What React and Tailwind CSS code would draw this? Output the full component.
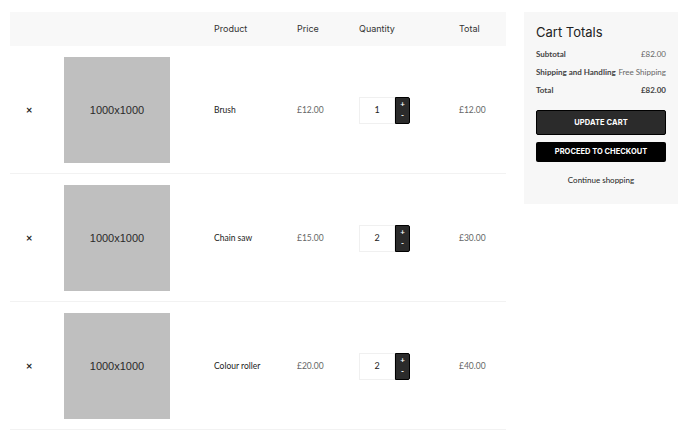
import React from "react";

const items = [
  { name: "Brush", price: "£12.00", qty: 1, total: "£12.00" },
  { name: "Chain saw", price: "£15.00", qty: 2, total: "£30.00" },
  { name: "Colour roller", price: "£20.00", qty: 2, total: "£40.00" },
];

const cols = "grid grid-cols-[54px_150px_83px_62px_100px_1fr] items-center";

function Qty({ value }) {
  return (
    <div className="flex h-[27px]">
      <div className="w-[36px] h-full bg-white border border-[#f0f0f0] flex items-center justify-center text-[9px] text-[#222] font-['Lato',sans-serif]">
        {value}
      </div>
      <div className="w-[15px] h-full bg-[#2b2b2b] border border-black rounded-r-[2px] flex flex-col items-center justify-center text-white text-[8px] leading-[11px] font-bold font-['Lato',sans-serif]">
        <span>+</span>
        <span>-</span>
      </div>
    </div>
  );
}

export default function App() {
  return (
    <div className="w-[700px] h-[436px] bg-white flex gap-[18px] pt-[12px] pl-[10px] overflow-hidden">
      <div className="w-[496px]">
        <div className={`${cols} h-[34px] bg-[#f8f8f8] text-[9px] text-[#333] font-['Inter',sans-serif]`}>
          <div></div>
          <div></div>
          <div>Product</div>
          <div>Price</div>
          <div>Quantity</div>
          <div>Total</div>
        </div>
        {items.map((it) => (
          <div key={it.name} className={`${cols} pt-[11px] pb-[10px] border-b border-[#f2f2f2] text-[8.5px] font-['Lato',sans-serif]`}>
            <div className="pl-[16px] text-[11px] font-bold text-[#222]">×</div>
            <div className="w-[106px] h-[106px] bg-[#bfbfbf] flex items-center justify-center text-[11px] text-[#2a2a2a] font-['Liberation_Sans',sans-serif]">
              1000x1000
            </div>
            <div className="text-[#222]">{it.name}</div>
            <div className="text-[#666]">{it.price}</div>
            <div><Qty value={it.qty} /></div>
            <div className="text-[#666]">{it.total}</div>
          </div>
        ))}
      </div>
      <div className="w-[154px] h-[192px] bg-[#f7f7f7] px-[12px] pt-[12px] flex flex-col">
        <div className="text-[13px] text-[#222] font-['Inter',sans-serif] leading-[16px]">Cart Totals</div>
        <div className="mt-[9px] flex flex-col gap-[7px] text-[8px] font-['Lato',sans-serif] leading-[11px]">
          <div className="flex justify-between">
            <span className="font-bold text-[#444]">Subtotal</span>
            <span className="text-[#666]">£82.00</span>
          </div>
          <div className="flex justify-between whitespace-nowrap">
            <span className="font-bold text-[#444]">Shipping and Handling</span>
            <span className="text-[#666]">Free Shipping</span>
          </div>
          <div className="flex justify-between">
            <span className="font-bold text-[#444]">Total</span>
            <span className="font-bold text-[#444]">£82.00</span>
          </div>
        </div>
        <button className="mt-[14px] h-[25px] w-full bg-[#2b2b2b] border border-black rounded-[2px] text-white text-[7.5px] font-bold font-['Inter',sans-serif] tracking-[0.1px]">
          UPDATE CART
        </button>
        <button className="mt-[7px] h-[20px] w-full bg-black rounded-[2px] text-white text-[7.5px] font-bold font-['Inter',sans-serif]">
          PROCEED TO CHECKOUT
        </button>
        <div className="mt-[12px] text-center text-[8px] text-[#222] font-['Lato',sans-serif]">Continue shopping</div>
      </div>
    </div>
  );
}
